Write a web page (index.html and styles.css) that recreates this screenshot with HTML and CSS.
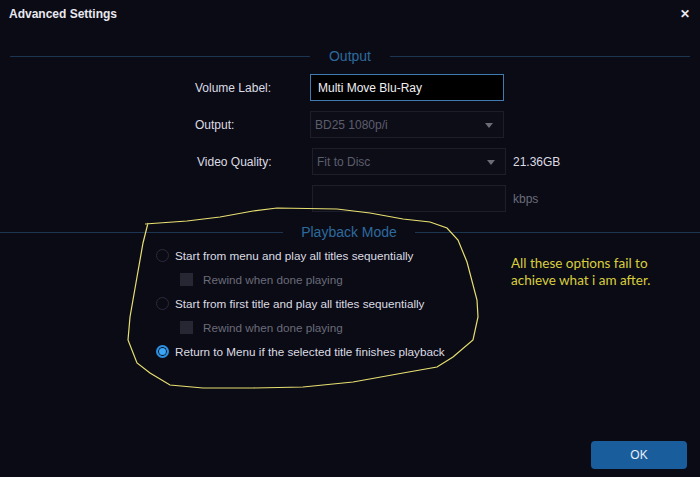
FILE: index.html
```html
<!DOCTYPE html>
<html lang="en">
<head>
  <meta charset="UTF-8">
  <meta name="viewport" content="width=device-width, initial-scale=1">
  <title>Advanced Settings</title>
  <link rel="stylesheet" href="styles.css">
</head>
<body>

  <div class="dialog">
    <div class="titlebar">
      <span class="title">Advanced Settings</span>
      <span class="close">&#10005;</span>
    </div>

    <div class="section-head out-head">
      <span class="line left"></span>
      <span class="head-text">Output</span>
      <span class="line right"></span>
    </div>

    <div class="form">
      <div class="row">
        <label class="lbl">Volume Label:</label>
        <div class="field input active">Multi Move Blu-Ray</div>
      </div>
      <div class="row">
        <label class="lbl">Output:</label>
        <div class="field select">BD25 1080p/i<span class="caret"></span></div>
      </div>
      <div class="row shift">
        <label class="lbl">Video Quality:</label>
        <div class="field select">Fit to Disc<span class="caret"></span></div>
        <span class="unit bright">21.36GB</span>
      </div>
      <div class="row shift">
        <label class="lbl"></label>
        <div class="field input"></div>
        <span class="unit">kbps</span>
      </div>
    </div>

    <div class="section-head play-head">
      <span class="line left"></span>
      <span class="head-text">Playback Mode</span>
      <span class="line right"></span>
    </div>

    <div class="options">
      <div class="opt"><span class="radio"></span>Start from menu and play all titles sequentially</div>
      <div class="opt sub"><span class="check"></span>Rewind when done playing</div>
      <div class="opt"><span class="radio"></span>Start from first title and play all titles sequentially</div>
      <div class="opt sub"><span class="check"></span>Rewind when done playing</div>
      <div class="opt"><span class="radio on"></span>Return to Menu if the selected title finishes playback</div>
    </div>

    <div class="footer">
      <button class="ok">OK</button>
    </div>

    <!-- annotation drawn over the screenshot -->
    <svg class="scribble" width="700" height="477" viewBox="0 0 700 477">
      <polyline fill="none" stroke="#e8e070" stroke-width="1.2"
        points="145,224 187,221 220,217 253,211 277,208 337,209 370,213 403,219 430,222 447,228 458,240 467,262 477,300 478,317 473,340 453,357 437,367 403,373 353,382 303,387 253,388 203,388 170,385 150,373 137,363 128,340 130,317 137,277 143,243 147,227 148,223"/>
    </svg>

    <div class="note">All these options fail to<br>achieve what i am after.</div>
  </div>

</body>
</html>
```

FILE: styles.css
```css
body {
  margin: 0;
  background: #0b0b16;
  font-family: "Liberation Sans", Arial, sans-serif;
}
.dialog {
  position: relative;
  width: 700px;
  height: 477px;
  background: #0b0b16;
  overflow: hidden;
}
.titlebar {
  height: 28px;
  display: flex;
  align-items: center;
  justify-content: space-between;
  padding: 0 10px 0 9px;
}
.title {
  color: #e8e8ee;
  font-weight: bold;
  font-size: 12px;
}
.close {
  color: #e8e8ee;
  font-size: 12px;
  font-weight: bold;
}
.section-head {
  display: flex;
  align-items: center;
  height: 20px;
}
.out-head {
  margin-top: 18px;
  padding-left: 10px;
}
.play-head {
  margin-top: 10px;
}
.line {
  height: 1px;
  background: #1c3550;
}
.out-head .left { width: 300px; }
.out-head .right { flex: 1; margin-right: 10px; }
.out-head .head-text { width: 80px; }
.play-head .left { width: 283px; }
.play-head .right { flex: 1; }
.head-text {
  color: #2d6a9c;
  font-size: 14px;
  text-align: center;
  width: 132px;
}
.form {
  display: flex;
  flex-direction: column;
  gap: 10px;
  margin-top: 8px;
}
.row {
  display: flex;
  align-items: center;
  height: 27px;
}
.row.shift .field { margin-left: 2px; }
.lbl {
  width: 115px;
  padding-left: 195px;
  color: #dcdce2;
  font-size: 12px;
}
.row.shift .lbl { padding-left: 197px; width: 113px; }
.field {
  box-sizing: border-box;
  width: 194px;
  height: 27px;
  border: 1px solid #1d1e2a;
  background: #0d0d18;
  color: #5c5e6c;
  font-size: 12px;
  display: flex;
  align-items: center;
  padding: 0 4px;
  position: relative;
}
.field.active {
  background: #000;
  border: 1px solid #3f7bb0;
  color: #f0f0f4;
  padding-left: 7px;
}
.caret {
  position: absolute;
  right: 10px;
  top: 11px;
  width: 0;
  height: 0;
  border-left: 4px solid transparent;
  border-right: 4px solid transparent;
  border-top: 5px solid #6a6c78;
}
.unit {
  margin-left: 7px;
  color: #6a6c78;
  font-size: 12px;
}
.unit.bright { color: #dcdce2; }
.options {
  display: flex;
  flex-direction: column;
  margin-top: 2px;
  padding-left: 156px;
}
.opt {
  display: flex;
  align-items: center;
  height: 23.8px;
  color: #dcdce2;
  font-size: 11.7px;
}
.opt.sub {
  padding-left: 24px;
  color: #6a6c78;
}
.radio {
  box-sizing: border-box;
  width: 13px;
  height: 13px;
  border: 1px solid #2a2b38;
  border-radius: 50%;
  margin-right: 6px;
}
.radio.on {
  border: 2px solid #2d8fe0;
  background: #39a6f6;
  box-shadow: inset 0 0 0 1px #0b0b16;
}
.check {
  width: 13px;
  height: 13px;
  background: #262733;
  margin-right: 10px;
}
.footer {
  position: absolute;
  right: 13px;
  bottom: 8px;
}
.ok {
  width: 96px;
  height: 28px;
  background: #1a5d9c;
  color: #e6eef8;
  border: none;
  border-radius: 4px;
  font-family: "Liberation Sans", Arial, sans-serif;
  font-size: 12px;
}
.scribble {
  position: absolute;
  left: 0;
  top: 0;
  pointer-events: none;
}
.note {
  position: absolute;
  left: 511px;
  top: 255px;
  color: #d8ce3c;
  font-family: Lato, "Open Sans", sans-serif;
  font-size: 13.5px;
  line-height: 17px;
}
```
